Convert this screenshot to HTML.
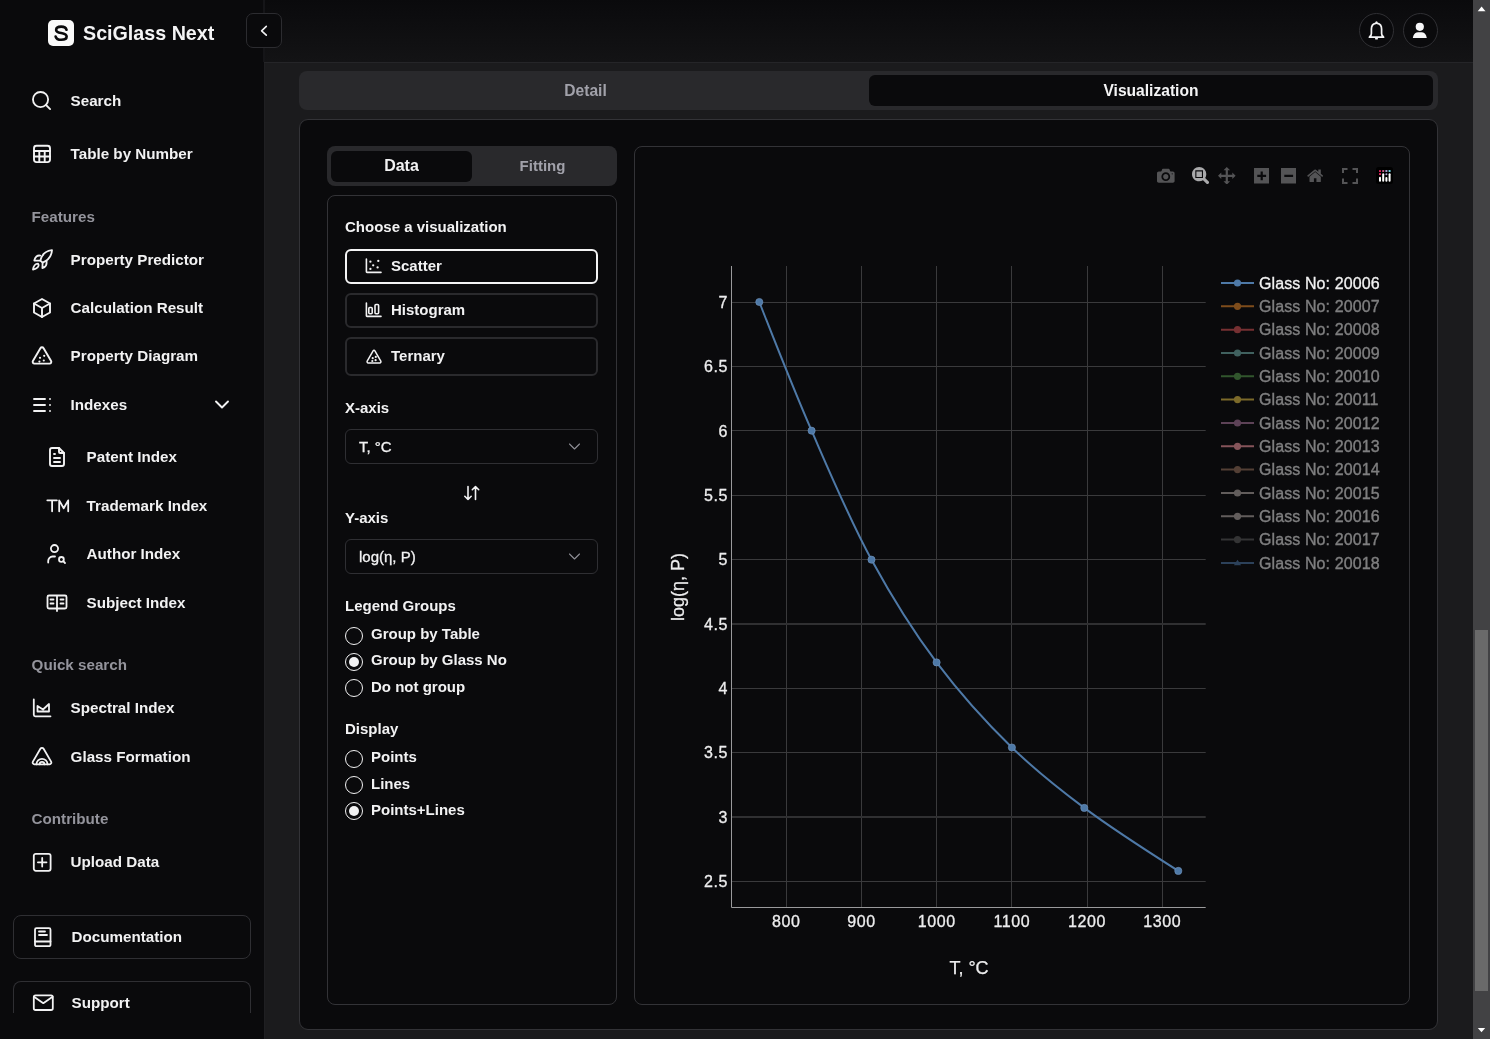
<!DOCTYPE html>
<html><head><meta charset="utf-8">
<style>
*{box-sizing:border-box;margin:0;padding:0}
html,body{-webkit-font-smoothing:antialiased;width:1490px;height:1039px;overflow:hidden;background:#1b1b1d;font-family:"Liberation Sans",sans-serif;color:#f4f4f5}
.abs{position:absolute}
#side{position:absolute;left:0;top:0;width:264px;height:1039px;background:#0a0a0c}
.logo{left:48px;top:20px;width:26px;height:26px;background:#fafafa;border-radius:5px}
.brand{left:83px;top:19px;font-size:19.7px;font-weight:700;line-height:28px;white-space:nowrap}
.nav{position:absolute;margin:1px 0 0 0.6px;font-size:15.2px;font-weight:700;line-height:18px;white-space:nowrap;color:#f2f2f3}
.sec{position:absolute;margin:0 0 0 0.6px;font-size:15.2px;font-weight:700;line-height:18px;color:#94949c;white-space:nowrap}
.ico{position:absolute;fill:none;stroke-linecap:round;stroke-linejoin:round}
.ico:not([stroke]){stroke:#f2f2f3}
.sbtn{position:absolute;left:13px;width:238px;height:44px;border:1px solid #2f2f33;border-radius:8px;background:#0a0a0c}
#hdr{position:absolute;left:264px;top:0;width:1209px;height:62px;background:linear-gradient(180deg,#0a0a0c,#131315)}
.collapse{left:246px;top:13px;width:36px;height:35px;border:1px solid #2c2c30;border-radius:7px;background:#0a0a0c}
.circ{position:absolute;top:13px;width:35px;height:35px;border:1px solid #303034;border-radius:50%;background:#0a0a0c}
.tabs{left:299px;top:71px;width:1139px;height:39px;background:#29292c;border-radius:8px}
.tabact{left:869px;top:75px;width:564px;height:31px;background:#0a0a0c;border-radius:6px}
.card{left:299px;top:119px;width:1139px;height:911px;border:1px solid #333337;border-radius:9px;background:#0a0a0c}
.dtabs{left:327px;top:146px;width:290px;height:40px;background:#29292c;border-radius:8px}
.dact{left:331px;top:151px;width:141px;height:31px;background:#0a0a0c;border-radius:6px}
.panel{left:327px;top:195px;width:290px;height:810px;border:1px solid #333337;border-radius:8px}
.chart{left:634px;top:146px;width:776px;height:859px;border:1px solid #333337;border-radius:8px}
.lbl{position:absolute;font-size:15px;font-weight:700;line-height:18px;white-space:nowrap;color:#f2f2f3}
.vbtn{position:absolute;left:345px;width:253px;border:2px solid #2a2a2d;border-radius:6px}
.sel{position:absolute;left:345px;width:253px;height:35px;border:1px solid #2f2f33;border-radius:6px}
.radio{position:absolute;left:345px;width:18px;height:18px;border:1.5px solid #f2f2f3;border-radius:50%}
.radio.on::after{content:"";position:absolute;left:2.5px;top:2.5px;width:10px;height:10px;border-radius:50%;background:#f2f2f3}
#sb{position:absolute;left:1473px;top:0;width:17px;height:1039px;background:#424244}
</style></head><body><div style="will-change:transform;position:absolute;left:0;top:0;width:1490px;height:1039px">
<div id="side">
  <div class="abs logo"></div>
  <svg class="abs" style="left:48px;top:20px" width="26" height="26" viewBox="0 0 26 26"><path d="M19.3 9.4C18.6 7.1 16.4 5.9 13.2 5.9C9.7 5.9 7.5 7.4 7.5 9.6C7.5 12 9.9 12.6 13.2 13.1C16.7 13.7 19.4 14.5 19.4 17.1C19.4 19.5 16.9 20.8 13.3 20.8C9.9 20.8 7.6 19.5 6.9 17.1" fill="none" stroke="#0a0a0c" stroke-width="3" stroke-linecap="round" transform="translate(13 13.2) scale(0.88) translate(-13 -13.3)"/></svg>
  <div class="abs brand">SciGlass Next</div>
  <svg class="ico" style="left:30px;top:89px" width="23" height="23" viewBox="0 0 24 24" stroke-width="1.9"><circle cx="11" cy="11" r="7.9"/><path d="M21 21l-4.3-4.3"/></svg>
  <div class="nav" style="left:70px;top:91px">Search</div>
  <svg class="ico" style="left:30px;top:142px" width="24" height="24" viewBox="0 0 24 24" stroke-width="1.9"><rect x="4" y="3.8" width="16" height="16.3" rx="2.5"/><path d="M4 9h16M4 14.5h16M9.3 9v11M14.7 9v11"/></svg>
  <div class="nav" style="left:70px;top:144px">Table by Number</div>
  <div class="sec" style="left:31px;top:208px">Features</div>
  <svg class="ico" style="left:28px;top:245px" width="30" height="30" viewBox="0 0 30 30" stroke-width="1.8"><path d="M12.3 15.6C13.5 10.5 17.5 6 24 5.2C23.6 11.5 19.6 15.5 14.6 17.6Z"/><path d="M12.3 10.6C9.3 10 7 11.8 6.3 15.5L12.3 15.6"/><path d="M14.6 17.6L14.4 23C17.6 22.4 19 20 18.6 16"/><path d="M5 24.6C5.4 21.3 7.4 18.6 10 18.6C11 19.6 10.8 21.2 9.6 22.3C8.6 23.3 6.8 24.2 5 24.6Z"/></svg>
  <div class="nav" style="left:70px;top:250px">Property Predictor</div>
  <svg class="ico" style="left:30px;top:296px" width="24" height="24" viewBox="0 0 24 24" stroke-width="1.9"><path d="M12 3l8 4.5v9l-8 4.5l-8-4.5v-9z"/><path d="M12 12l8-4.5M12 12v9M12 12L4 7.5"/></svg>
  <div class="nav" style="left:70px;top:298px">Calculation Result</div>
  <svg class="ico" style="left:30px;top:344px" width="24" height="24" viewBox="0 0 24 24" stroke-width="1.9"><path d="M10.4 4.2L2.9 16.9a1.8 1.8 0 0 0 1.5 2.7h15.2a1.8 1.8 0 0 0 1.5-2.7L13.6 4.2a1.85 1.85 0 0 0-3.2 0z"/></svg>
  <svg class="abs" style="left:30px;top:344px" width="24" height="24" viewBox="0 0 24 24" fill="#f2f2f3"><circle cx="10" cy="13.8" r="1.1"/><circle cx="14.2" cy="11.8" r="1.1"/><circle cx="13.8" cy="16.5" r="1.1"/><circle cx="9.4" cy="17.6" r="1.1"/></svg>
  <div class="nav" style="left:70px;top:346px">Property Diagram</div>
  <svg class="ico" style="left:30px;top:393px" width="24" height="24" viewBox="0 0 24 24" stroke-width="1.9"><path d="M4 6h11M4 12h11M4 18h11M20 6v.01M20 12v.01M20 18v.01"/></svg>
  <div class="nav" style="left:70px;top:395px">Indexes</div>
  <svg class="ico" style="left:213px;top:395px" width="18" height="18" viewBox="0 0 18 18" stroke-width="1.9"><path d="M3 6.5l6 6l6-6"/></svg>
  <svg class="ico" style="left:45px;top:445px" width="24" height="24" viewBox="0 0 24 24" stroke-width="1.9"><path d="M14 3v4a1 1 0 0 0 1 1h4"/><path d="M17 21H7a2 2 0 0 1-2-2V5a2 2 0 0 1 2-2h7l5 5v11a2 2 0 0 1-2 2z"/><path d="M9 9h1M9 13h6M9 17h6"/></svg>
  <div class="nav" style="left:86px;top:447px">Patent Index</div>
  <svg class="ico" style="left:42px;top:490px" width="30" height="30" viewBox="0 0 30 30" stroke-width="1.8"><path d="M5.3 10.3h9.6M10.1 10.3v11M17.2 21.3V10.4l4.5 7.9l4.5-7.9v10.9"/></svg>
  <div class="nav" style="left:86px;top:496px">Trademark Index</div>
  <svg class="ico" style="left:42px;top:540px" width="30" height="30" viewBox="0 0 30 30" stroke-width="1.8"><circle cx="12.5" cy="8.6" r="3.6"/><path d="M6.2 22.5v-1.6a4.4 4.4 0 0 1 4.4-4.4h2.4"/><circle cx="19.4" cy="19.4" r="2.4"/><path d="M21.2 21.2L23 23"/></svg>
  <div class="nav" style="left:86px;top:544px">Author Index</div>
  <svg class="ico" style="left:42px;top:588.5px" width="30" height="30" viewBox="0 0 30 30" stroke-width="1.8"><path d="M15 6.5H7a1.5 1.5 0 0 0-1.5 1.5v10a1.5 1.5 0 0 0 1.5 1.5h8M15 6.5h8a1.5 1.5 0 0 1 1.5 1.5v10a1.5 1.5 0 0 1-1.5 1.5h-8M15 6.5v15.5"/><path d="M8.5 10.5h3M8.5 14.5h3M18.5 10.5h3M18.5 14.5h3"/></svg>
  <div class="nav" style="left:86px;top:593px">Subject Index</div>
  <div class="sec" style="left:31px;top:656px">Quick search</div>
  <svg class="ico" style="left:26px;top:690px" width="34" height="34" viewBox="0 0 34 34" stroke-width="1.8"><path d="M7.8 9.4v15.4a1.5 1.5 0 0 0 1.5 1.5h15.2"/><path d="M11.5 21.5v-5.5l5.5 3.5l6-5.5v7.5z"/></svg>
  <div class="nav" style="left:70px;top:698px">Spectral Index</div>
  <svg class="ico" style="left:26px;top:740px" width="34" height="34" viewBox="0 0 34 34" stroke-width="1.8"><path d="M14.4 8.8L6.9 21.6a1.8 1.8 0 0 0 1.5 2.7h15.2a1.8 1.8 0 0 0 1.5-2.7L17.6 8.8a1.85 1.85 0 0 0-3.2 0z"/><path d="M10.5 24.3a5.5 5.5 0 0 1 11 0M13.6 24.3a2.4 2.4 0 0 1 4.8 0"/></svg>
  <div class="nav" style="left:70px;top:747px">Glass Formation</div>
  <div class="sec" style="left:31px;top:810px">Contribute</div>
  <svg class="ico" style="left:26px;top:845px" width="34" height="34" viewBox="0 0 34 34" stroke-width="1.8"><rect x="7.8" y="8.8" width="16.8" height="17" rx="2"/><path d="M16.2 13v8.6M11.9 17.3h8.6"/></svg>
  <div class="nav" style="left:70px;top:852px">Upload Data</div>
  <div class="sbtn" style="top:915px"></div>
  <svg class="ico" style="left:26px;top:919px" width="34" height="34" viewBox="0 0 34 34" stroke-width="1.8"><path d="M10.5 9.2h12.5a1.5 1.5 0 0 1 1.5 1.5v15a1.5 1.5 0 0 1-1.5 1.5H10.5a1.5 1.5 0 0 1-1.5-1.5v-15a1.5 1.5 0 0 1 1.5-1.5z"/><path d="M9 22.5h15.5M13 12.5h6M13 16h8"/></svg>
  <div class="nav" style="left:71px;top:927px">Documentation</div>
  <div class="sbtn" style="top:981px;height:32px;border-bottom:none;border-radius:8px 8px 0 0"></div>
  <svg class="ico" style="left:26px;top:986px" width="34" height="34" viewBox="0 0 34 34" stroke-width="1.8"><rect x="7.8" y="9.4" width="19" height="14.6" rx="1.8"/><path d="M8 10.8l9.3 6.4l9.3-6.4"/></svg>
  <div class="nav" style="left:71px;top:993px">Support</div>
</div>
<div id="hdr"></div>
<div class="abs" style="left:263px;top:0;width:2px;height:62px;background:#151518"></div>

<div class="abs collapse"></div>
<div class="circ" style="left:1359px"></div>
<div class="circ" style="left:1403px"></div>
<div class="abs" style="left:264px;top:62px;width:1px;height:977px;background:#1f1f22"></div>
<div class="abs" style="left:264px;top:62px;width:1209px;height:1px;background:#252528"></div>
<svg class="ico" style="left:246px;top:13px" width="36" height="35" viewBox="0 0 36 35" stroke-width="1.6"><path d="M20.3 13.4L15.6 17.8l4.7 4.4"/></svg>
<svg class="abs" style="left:1359px;top:13px" width="35" height="35" viewBox="0 0 35 35"><path d="M17.5 9.1l.9 1.3c2.5.5 4.2 2.9 4.2 5.6v4.5c0 1.2.5 2.3 1.5 3l.5.7H10.4l.5-.7c1-.7 1.5-1.8 1.5-3V16c0-2.7 1.7-5.1 4.2-5.6z" fill="none" stroke="#f4f4f5" stroke-width="1.7" stroke-linejoin="round"/><rect x="16" y="24.9" width="3" height="1.5" rx=".6" fill="#f4f4f5"/></svg>
<svg class="abs" style="left:1403px;top:13px" width="35" height="35" viewBox="0 0 35 35" fill="#f7f7f8"><circle cx="16.8" cy="13.8" r="4.1"/><path d="M9.8 25h14l-.6-2.2c-.6-2-2.4-3.6-4.6-3.6h-3.6c-2.2 0-4 1.6-4.6 3.6z"/></svg>
<div class="abs tabs"></div>
<div class="abs tabact"></div>
<div class="lbl" style="left:303px;top:82px;width:565px;text-align:center;color:#a1a1aa;font-size:15.6px">Detail</div>
<div class="lbl" style="left:869px;top:82px;width:564px;text-align:center;color:#f4f4f5;font-size:15.6px">Visualization</div>
<div class="abs card"></div>
<div class="abs dtabs"></div>
<div class="abs dact"></div>
<div class="lbl" style="left:331px;top:157px;width:141px;text-align:center;font-size:16px">Data</div>
<div class="lbl" style="left:472px;top:157px;width:141px;text-align:center;color:#a1a1aa;font-size:15px;margin-top:-0.5px">Fitting</div>
<div class="abs panel"></div>
<div class="lbl" style="left:345px;top:218px">Choose a visualization</div>
<div class="vbtn" style="top:249px;height:35px;border-color:#f4f4f5"></div>
<svg class="ico" style="left:363px;top:256px" width="20" height="20" viewBox="0 0 20 20" stroke-width="1.6"><path d="M3.4 3v12.8a.6.6 0 0 0 .6.6h14"/></svg>
<svg class="abs" style="left:363px;top:256px" width="20" height="20" viewBox="0 0 20 20" fill="#f2f2f3"><circle cx="7.4" cy="5.7" r="1.15"/><circle cx="15.3" cy="4.9" r="1.15"/><circle cx="10.2" cy="9.3" r="1.15"/><circle cx="14.6" cy="11.4" r="1.15"/><circle cx="7.4" cy="12.9" r="1.15"/></svg>
<div class="lbl" style="left:391px;top:257px">Scatter</div>
<div class="vbtn" style="top:293px;height:35px"></div>
<svg class="ico" style="left:363px;top:300px" width="20" height="20" viewBox="0 0 20 20" stroke-width="1.6"><path d="M3.4 3v12.8a.6.6 0 0 0 .6.6h14"/><rect x="5.8" y="7.5" width="3.4" height="6.2" rx="1"/><rect x="12" y="4.5" width="3.6" height="9.2" rx="1"/></svg>
<div class="lbl" style="left:391px;top:301px">Histogram</div>
<div class="vbtn" style="top:337px;height:39px"></div>
<svg class="ico" style="left:364px;top:347px" width="20" height="20" viewBox="0 0 20 20" stroke-width="1.5"><path d="M9.1 3.8L3.2 14.2a1.3 1.3 0 0 0 1.1 1.9h11.4a1.3 1.3 0 0 0 1.1-1.9L10.9 3.8a1.05 1.05 0 0 0-1.8 0z"/></svg>
<svg class="abs" style="left:364px;top:347px" width="20" height="20" viewBox="0 0 20 20" fill="#f2f2f3"><circle cx="8.7" cy="11.2" r="1.1"/><circle cx="11.8" cy="9.9" r="1.1"/><circle cx="11.6" cy="13.2" r="1.1"/><circle cx="8.3" cy="14" r="1.1"/></svg>
<div class="lbl" style="left:391px;top:347px">Ternary</div>
<div class="lbl" style="left:345px;top:399px">X-axis</div>
<div class="sel" style="top:429px"></div>
<div class="lbl" style="left:359px;top:438px;font-weight:400;-webkit-text-stroke:0.3px #f2f2f3">T, °C</div>
<svg class="ico" style="left:566px;top:438px" width="17" height="17" viewBox="0 0 17 17" stroke="#8e8e94" stroke-width="1.1"><path d="M3.5 6l5 5l5-5"/></svg>
<svg class="ico" style="left:462px;top:484px" width="20" height="18" viewBox="0 0 20 18" stroke-width="1.6"><path d="M6 2.5v13M2.8 12.3L6 15.5l3.2-3.2M13.5 15.5v-13M10.3 5.7L13.5 2.5l3.2 3.2"/></svg>
<div class="lbl" style="left:345px;top:509px">Y-axis</div>
<div class="sel" style="top:539px"></div>
<div class="lbl" style="left:359px;top:548px;font-weight:400;-webkit-text-stroke:0.3px #f2f2f3">log(η, P)</div>
<svg class="ico" style="left:566px;top:548px" width="17" height="17" viewBox="0 0 17 17" stroke="#8e8e94" stroke-width="1.1"><path d="M3.5 6l5 5l5-5"/></svg>
<div class="lbl" style="left:345px;top:597px">Legend Groups</div>
<div class="radio" style="top:627px"></div><div class="lbl" style="left:371px;top:625px">Group by Table</div>
<div class="radio on" style="top:653px"></div><div class="lbl" style="left:371px;top:651px">Group by Glass No</div>
<div class="radio" style="top:679px"></div><div class="lbl" style="left:371px;top:678px">Do not group</div>
<div class="lbl" style="left:345px;top:720px">Display</div>
<div class="radio" style="top:750px"></div><div class="lbl" style="left:371px;top:748px">Points</div>
<div class="radio" style="top:776px"></div><div class="lbl" style="left:371px;top:775px">Lines</div>
<div class="radio on" style="top:802px"></div><div class="lbl" style="left:371px;top:801px">Points+Lines</div>
<div class="abs chart"></div>
<svg class="abs" style="left:0;top:0" width="1490" height="1039" viewBox="0 0 1490 1039">
<path d="M786.5 266 V907 M861.5 266 V907 M936.5 266 V907 M1011.5 266 V907 M1087.5 266 V907 M1162.5 266 V907 M731 881.5 H1205.7 M731 752.5 H1205.7 M731 688.5 H1205.7 M731 559.5 H1205.7 M731 495.5 H1205.7 M731 430.5 H1205.7 M731 366.5 H1205.7 M731 302.5 H1205.7" stroke="#3a3a3c" stroke-width="1" fill="none"/>
<path d="M731 817.0 H1205.7 M731 624.0 H1205.7" stroke="#303032" stroke-width="2" fill="none"/>
<path d="M731.5 266 V907.5 H1205.7" stroke="#9a9a9c" stroke-width="1" fill="none"/>
<path d="M759.30 302.00Q793.02 388.00 811.60 430.70C830.40 473.91 849.71 519.80 871.50 559.70C891.64 596.59 912.73 630.65 936.60 662.40C959.67 693.09 986.07 722.41 1011.90 747.50C1035.43 770.35 1058.03 788.23 1084.30 807.90Q1113.07 829.45 1178.30 870.90" stroke="#4e79a7" stroke-width="2" fill="none"/>
<circle cx="759.3" cy="302.0" r="3.6" fill="#4e79a7" stroke="#7396bd" stroke-width="0.6"/>
<circle cx="811.6" cy="430.7" r="3.6" fill="#4e79a7" stroke="#7396bd" stroke-width="0.6"/>
<circle cx="871.5" cy="559.7" r="3.6" fill="#4e79a7" stroke="#7396bd" stroke-width="0.6"/>
<circle cx="936.6" cy="662.4" r="3.6" fill="#4e79a7" stroke="#7396bd" stroke-width="0.6"/>
<circle cx="1011.9" cy="747.5" r="3.6" fill="#4e79a7" stroke="#7396bd" stroke-width="0.6"/>
<circle cx="1084.3" cy="807.9" r="3.6" fill="#4e79a7" stroke="#7396bd" stroke-width="0.6"/>
<circle cx="1178.3" cy="870.9" r="3.6" fill="#4e79a7" stroke="#7396bd" stroke-width="0.6"/>
<g font-family="Liberation Sans" font-size="16" fill="#ededee" stroke="#ededee" stroke-width="0.3" letter-spacing="0.6"><text x="786.3" y="927" text-anchor="middle">800</text><text x="861.5" y="927" text-anchor="middle">900</text><text x="936.7" y="927" text-anchor="middle">1000</text><text x="1011.8" y="927" text-anchor="middle">1100</text><text x="1087.0" y="927" text-anchor="middle">1200</text><text x="1162.2" y="927" text-anchor="middle">1300</text><text x="728" y="886.8" text-anchor="end">2.5</text><text x="728" y="822.5" text-anchor="end">3</text><text x="728" y="758.1" text-anchor="end">3.5</text><text x="728" y="693.8" text-anchor="end">4</text><text x="728" y="629.5" text-anchor="end">4.5</text><text x="728" y="565.1" text-anchor="end">5</text><text x="728" y="500.8" text-anchor="end">5.5</text><text x="728" y="436.5" text-anchor="end">6</text><text x="728" y="372.1" text-anchor="end">6.5</text><text x="728" y="307.8" text-anchor="end">7</text></g>
<text x="969" y="974" text-anchor="middle" font-family="Liberation Sans" font-size="18" fill="#ededee" stroke="#ededee" stroke-width="0.25">T, °C</text>
<text transform="translate(684 587) rotate(-90)" text-anchor="middle" font-family="Liberation Sans" font-size="18" fill="#ededee" stroke="#ededee" stroke-width="0.25">log(η, P)</text>
<g opacity="1"><path d="M1221 283.0 H1254" stroke="#4e79a7" stroke-width="2"/><circle cx="1237.5" cy="283.0" r="3.6" fill="#4e79a7"/><text x="1259" y="288.6" font-family="Liberation Sans" font-size="16" fill="#f2f2f2" stroke="#f2f2f2" stroke-width="0.3" letter-spacing="0.1">Glass No: 20006</text></g><g opacity="0.5"><path d="M1221 306.3 H1254" stroke="#f28e2b" stroke-width="2"/><circle cx="1237.5" cy="306.3" r="3.6" fill="#f28e2b"/><text x="1259" y="311.9" font-family="Liberation Sans" font-size="16" fill="#f2f2f2" stroke="#f2f2f2" stroke-width="0.3" letter-spacing="0.1">Glass No: 20007</text></g><g opacity="0.5"><path d="M1221 329.7 H1254" stroke="#e15759" stroke-width="2"/><circle cx="1237.5" cy="329.7" r="3.6" fill="#e15759"/><text x="1259" y="335.3" font-family="Liberation Sans" font-size="16" fill="#f2f2f2" stroke="#f2f2f2" stroke-width="0.3" letter-spacing="0.1">Glass No: 20008</text></g><g opacity="0.5"><path d="M1221 353.0 H1254" stroke="#76b7b2" stroke-width="2"/><circle cx="1237.5" cy="353.0" r="3.6" fill="#76b7b2"/><text x="1259" y="358.6" font-family="Liberation Sans" font-size="16" fill="#f2f2f2" stroke="#f2f2f2" stroke-width="0.3" letter-spacing="0.1">Glass No: 20009</text></g><g opacity="0.5"><path d="M1221 376.3 H1254" stroke="#59a14f" stroke-width="2"/><circle cx="1237.5" cy="376.3" r="3.6" fill="#59a14f"/><text x="1259" y="381.9" font-family="Liberation Sans" font-size="16" fill="#f2f2f2" stroke="#f2f2f2" stroke-width="0.3" letter-spacing="0.1">Glass No: 20010</text></g><g opacity="0.5"><path d="M1221 399.6 H1254" stroke="#edc948" stroke-width="2"/><circle cx="1237.5" cy="399.6" r="3.6" fill="#edc948"/><text x="1259" y="405.2" font-family="Liberation Sans" font-size="16" fill="#f2f2f2" stroke="#f2f2f2" stroke-width="0.3" letter-spacing="0.1">Glass No: 20011</text></g><g opacity="0.5"><path d="M1221 423.0 H1254" stroke="#b07aa1" stroke-width="2"/><circle cx="1237.5" cy="423.0" r="3.6" fill="#b07aa1"/><text x="1259" y="428.6" font-family="Liberation Sans" font-size="16" fill="#f2f2f2" stroke="#f2f2f2" stroke-width="0.3" letter-spacing="0.1">Glass No: 20012</text></g><g opacity="0.5"><path d="M1221 446.3 H1254" stroke="#ff9da7" stroke-width="2"/><circle cx="1237.5" cy="446.3" r="3.6" fill="#ff9da7"/><text x="1259" y="451.9" font-family="Liberation Sans" font-size="16" fill="#f2f2f2" stroke="#f2f2f2" stroke-width="0.3" letter-spacing="0.1">Glass No: 20013</text></g><g opacity="0.5"><path d="M1221 469.6 H1254" stroke="#9c755f" stroke-width="2"/><circle cx="1237.5" cy="469.6" r="3.6" fill="#9c755f"/><text x="1259" y="475.2" font-family="Liberation Sans" font-size="16" fill="#f2f2f2" stroke="#f2f2f2" stroke-width="0.3" letter-spacing="0.1">Glass No: 20014</text></g><g opacity="0.5"><path d="M1221 493.0 H1254" stroke="#bab0ac" stroke-width="2"/><circle cx="1237.5" cy="493.0" r="3.6" fill="#bab0ac"/><text x="1259" y="498.6" font-family="Liberation Sans" font-size="16" fill="#f2f2f2" stroke="#f2f2f2" stroke-width="0.3" letter-spacing="0.1">Glass No: 20015</text></g><g opacity="0.5"><path d="M1221 516.3 H1254" stroke="#bab0ac" stroke-width="2"/><circle cx="1237.5" cy="516.3" r="3.6" fill="#bab0ac"/><text x="1259" y="521.9" font-family="Liberation Sans" font-size="16" fill="#f2f2f2" stroke="#f2f2f2" stroke-width="0.3" letter-spacing="0.1">Glass No: 20016</text></g><g opacity="0.5"><path d="M1221 539.6 H1254" stroke="#5f5f5f" stroke-width="2"/><circle cx="1237.5" cy="539.6" r="3.6" fill="#5f5f5f"/><text x="1259" y="545.2" font-family="Liberation Sans" font-size="16" fill="#f2f2f2" stroke="#f2f2f2" stroke-width="0.3" letter-spacing="0.1">Glass No: 20017</text></g><g opacity="0.5"><path d="M1221 563.0 H1254" stroke="#4e79a7" stroke-width="2"/><path d="M1237.5 559.8 l3.6 5.4 h-7.2z" fill="#4e79a7"/><text x="1259" y="568.6" font-family="Liberation Sans" font-size="16" fill="#f2f2f2" stroke="#f2f2f2" stroke-width="0.3" letter-spacing="0.1">Glass No: 20018</text></g>
</svg>
<svg class="abs" style="left:1157.03px;top:167.13px" width="17.60" height="17.6" viewBox="0 0 1000 1000"><path fill="#545456" transform="matrix(1 0 0 -1 0 850)" d="m500 450c-83 0-150-67-150-150 0-83 67-150 150-150 83 0 150 67 150 150 0 83-67 150-150 150z m400 150h-120c-16 0-34 13-39 29l-31 93c-6 15-23 28-40 28h-340c-16 0-34-13-39-28l-31-94c-6-15-23-28-40-28h-120c-55 0-100-45-100-100v-450c0-55 45-100 100-100h800c55 0 100 45 100 100v450c0 55-45 100-100 100z m-400-550c-138 0-250 112-250 250 0 138 112 250 250 250 138 0 250-112 250-250 0-138-112-250-250-250z m365 380c-19 0-35 16-35 35 0 19 16 35 35 35 19 0 35-16 35-35 0-19-16-35-35-35z"/></svg>
<svg class="abs" style="left:1191.53px;top:166.73px" width="17.60" height="17.6" viewBox="0 0 1000 1000"><path fill="#a9a9ab" transform="matrix(1 0 0 -1 0 850)" d="m1000-25l-250 251c40 63 63 138 63 218 0 224-182 406-407 406-224 0-406-182-406-406s183-406 407-406c80 0 155 22 218 62l250-250 125 125z m-812 250l0 438 437 0 0-438-437 0z m62 375l313 0 0-312-313 0 0 312z"/></svg>
<svg class="abs" style="left:1218.03px;top:166.73px" width="17.60" height="17.6" viewBox="0 0 1000 1000"><path fill="#545456" transform="matrix(1 0 0 -1 0 850)" d="m1000 350l-187 188 0-125-250 0 0 250 125 0-188 187-187-187 125 0 0-250-250 0 0 125-188-188 186-187 0 125 252 0 0-250-125 0 187-188 188 188-125 0 0 250 250 0 0-126 187 188z"/></svg>
<svg class="abs" style="left:1253.99px;top:166.93px" width="15.40" height="17.6" viewBox="0 0 875 1000"><path fill="#545456" transform="matrix(1 0 0 -1 0 850)" d="m1 787l0-875 875 0 0 875-875 0z m687-500l-187 0 0-187-125 0 0 187-188 0 0 125 188 0 0 188 125 0 0-188 187 0 0-125z"/></svg>
<svg class="abs" style="left:1281.09px;top:166.93px" width="15.40" height="17.6" viewBox="0 0 875 1000"><path fill="#545456" transform="matrix(1 0 0 -1 0 850)" d="m0 788l0-876 875 0 0 876-875 0z m688-500l-500 0 0 125 500 0 0-125z"/></svg>
<svg class="abs" style="left:1306.67px;top:166.73px" width="16.34" height="17.6" viewBox="0 0 928.6 1000"><path fill="#545456" transform="matrix(1 0 0 -1 0 850)" d="m786 296v-267q0-15-11-26t-25-10h-214v214h-143v-214h-214q-15 0-25 10t-11 26v267q0 1 0 2t0 2l321 264 321-264q1-1 1-4z m124 39l-34-41q-5-5-12-6h-2q-7 0-12 3l-386 322-386-322q-7-4-13-4-7 2-12 7l-35 41q-4 5-3 13t6 12l401 334q18 15 42 15t43-15l136-114v109q0 8 5 13t13 5h107q8 0 13-5t5-13v-227l122-102q5-5 6-12t-4-13z"/></svg>
<svg class="abs" style="left:1342px;top:168px" width="16" height="16" viewBox="0 0 16 16"><path d="M1 5V1h4.5M10.5 1H15v4M15 10.5V15h-4.5M5.5 15H1v-4.5" fill="none" stroke="#545456" stroke-width="2"/></svg>
<svg class="abs" style="left:1376px;top:167px" width="17" height="17" viewBox="0 0 17 17"><rect width="17" height="17" rx="2.5" fill="#000"/><g fill="#fff"><rect x="3" y="9.7" width="2" height="5" rx="1"/><rect x="6.2" y="6.3" width="2" height="8.4" rx="1"/><rect x="9.4" y="10.1" width="2" height="4.6" rx="1"/><rect x="12.6" y="6.3" width="2" height="8.4" rx="1"/></g><rect x="3" y="3" width="2" height="2" rx=".6" fill="#d81f5a"/><rect x="3" y="6.1" width="2" height="2" rx=".6" fill="#e0245e"/><rect x="6.2" y="3" width="2" height="2" rx=".6" fill="#c45b85"/><rect x="9.4" y="3" width="2" height="2" rx=".6" fill="#a99bcc"/><rect x="9.4" y="6.2" width="2" height="2" rx="1" fill="#b3a3d6"/><rect x="12.6" y="3" width="2" height="2" rx=".6" fill="#69d2e3"/></svg>
<div id="sb"></div>
<div class="abs" style="left:1475px;top:630px;width:13px;height:361px;background:#6a6a6a"></div>
<svg class="abs" style="left:1473px;top:0" width="17" height="17" viewBox="0 0 17 17"><path d="M4.7 11.2L8.6 6.5l3.9 4.7z" fill="#fff"/></svg>
<svg class="abs" style="left:1473px;top:1022px" width="17" height="17" viewBox="0 0 17 17"><path d="M4.8 6l3.7 4.2l3.7-4.2z" fill="#fff"/></svg>

</div></body></html>
